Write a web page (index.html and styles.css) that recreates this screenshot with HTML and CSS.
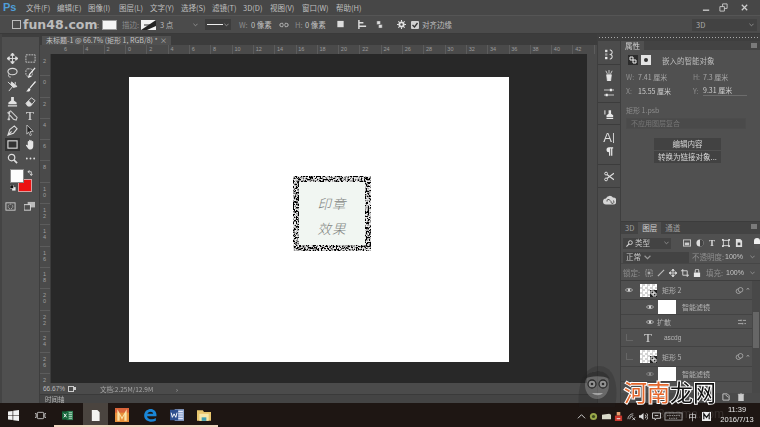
FILE: index.html
```html
<!DOCTYPE html>
<html lang="zh">
<head>
<meta charset="utf-8">
<title>Photoshop</title>
<link rel="stylesheet" href="styles.css">
</head>
<body>
<svg class="defs" width="0" height="0">
  <defs>
    <filter id="noise" x="-5%" y="-5%" width="110%" height="110%">
      <feTurbulence type="fractalNoise" baseFrequency="0.6" numOctaves="2" seed="7" result="t"/>
      <feColorMatrix in="t" type="matrix" values="0 0 0 0 0  0 0 0 0 0  0 0 0 0 0  4 4 0 0 -3.400" result="a"/>
      <feFlood flood-color="#ececec" result="w"/>
      <feMerge result="m"><feMergeNode in="w"/><feMergeNode in="a"/></feMerge>
      <feComposite in="m" in2="SourceAlpha" operator="in"/>
    </filter>
    <symbol id="eye" viewBox="0 0 12 8"><path d="M.5 4C3 .8 9 .8 11.500 4 9 7.200 3 7.200 .5 4Z" fill="none" stroke="#d8d8d8"/><circle cx="6" cy="4" r="1.800" fill="#d8d8d8"/></symbol>
    <symbol id="link" viewBox="0 0 12 10"><circle cx="4.500" cy="6" r="3.300" fill="none" stroke="#bbb"/><circle cx="7.500" cy="4" r="3.300" fill="#505050" stroke="#bbb"/></symbol>
    <symbol id="smart" viewBox="0 0 7 7"><rect width="7" height="7" fill="#222"/><path d="M1 1h3v3H1zM3 3h3v3H3z" fill="none" stroke="#eee"/></symbol>
  </defs>
</svg>
<div class="app">
  <header class="menubar">
    <span class="ps">Ps</span>
    <span class="mi">文件(F)</span><span class="mi">编辑(E)</span><span class="mi">图像(I)</span><span class="mi">图层(L)</span><span class="mi">文字(Y)</span><span class="mi">选择(S)</span><span class="mi">滤镜(T)</span><span class="mi mi-3d">3D(D)</span><span class="mi mi-view">视图(V)</span><span class="mi mi-win">窗口(W)</span><span class="mi">帮助(H)</span>
    <span class="winctl">
      <svg class="wc" viewBox="0 0 10 10"><path d="M1 8h7" stroke="#ccc" stroke-width="1.500"/></svg>
      <svg class="wc" viewBox="0 0 10 10"><path d="M1 4h5v5H1zM4 4V1h5v5H6" fill="none" stroke="#ccc"/></svg>
      <svg class="wc wc-x" viewBox="0 0 10 10"><path d="M2 2l6 6M8 2l-6 6" stroke="#ccc" stroke-width="1.400"/></svg>
    </span>
  </header>

  <div class="options">
    <span class="wm"><i class="wm-box"></i>fun48.com</span>
    <span class="colon">:</span>
    <span class="swatch"></span>
    <span class="lbl l-stroke">描边:</span>
    <svg class="swatch2" viewBox="0 0 15 10"><rect width="15" height="10" fill="#f2f2f2"/><path d="M0 10L15 0V6L6 10Z" fill="#222"/><path d="M3 5h9" stroke="#222"/></svg>
    <span class="lbl l-size">3 点</span>
    <svg class="caret c-size" viewBox="0 0 6 4"><path d="M.5.5L3 3 5.500.5" fill="none" stroke="#999"/></svg>
    <span class="linebtn"><i class="line"></i><svg class="caret" viewBox="0 0 6 4"><path d="M.5.5L3 3 5.500.5" fill="none" stroke="#999"/></svg></span>
    <span class="lbl l-w">W:</span>
    <span class="val">0 像素</span>
    <svg class="chain" viewBox="0 0 12 6"><path d="M5 1H3a2 2 0 000 4h2M7 1h2a2 2 0 010 4H7M4 3h4" fill="none" stroke="#ccc"/></svg>
    <span class="lbl l-h">H:</span>
    <span class="val v-h">0 像素</span>
    <svg class="opi o1" viewBox="0 0 10 10"><rect x="1.500" y="1" width="7" height="7" fill="#ddd"/></svg>
    <svg class="opi o2" viewBox="0 0 10 10"><path d="M1 0v10M1 3h5M1 7h8" stroke="#ddd" stroke-width="1.600"/></svg>
    <svg class="opi o3" viewBox="0 0 10 10"><path d="M2 1h4v4H2zM4 5h4v4H4z" fill="#ddd" stroke="#555" stroke-width=".5"/></svg>
    <svg class="opi o4" viewBox="0 0 10 10"><circle cx="5" cy="5" r="2.400" fill="none" stroke="#e2e2e2" stroke-width="2"/><path d="M5 0v2M5 8v2M0 5h2M8 5h2M1.500 1.500l1.400 1.400M7.100 7.100l1.400 1.400M1.500 8.500l1.400-1.400M7.100 2.900l1.400-1.400" stroke="#e2e2e2" stroke-width="1.200"/></svg>
    <svg class="check" viewBox="0 0 8 8"><rect width="8" height="8" rx="1" fill="#d0d0d0"/><path d="M1.500 4l2 2 3-4" fill="none" stroke="#333" stroke-width="1.300"/></svg>
    <span class="lbl l-align">对齐边缘</span>
    <span class="sel3d"><span>3D</span><svg class="caret" viewBox="0 0 6 4"><path d="M.5.5L3 3 5.500.5" fill="none" stroke="#999"/></svg></span>
  </div>

  <div class="main">
    <aside class="tools">
      <div class="grip"></div>
      <div class="toolgrid">
        <svg class="ti" viewBox="0 0 12 12"><path d="M6 0v12M0 6h12M6 0L4 2.500h4zM6 12L4 9.500h4zM0 6l2.500-2v4zM12 6L9.500 4v4z" stroke="#ddd" fill="#ddd"/></svg>
        <svg class="ti" viewBox="0 0 12 12"><rect x="1" y="2" width="10" height="8" fill="none" stroke="#ccc" stroke-dasharray="2 1"/></svg>
        <svg class="ti" viewBox="0 0 12 12"><ellipse cx="6" cy="5" rx="5" ry="3.500" fill="none" stroke="#ddd" stroke-width="1.200"/><path d="M2 8c-1 2 0 3 2 3" fill="none" stroke="#ddd"/></svg>
        <svg class="ti" viewBox="0 0 12 12"><rect x="1" y="2" width="7" height="8" rx="2" fill="none" stroke="#ccc" stroke-dasharray="2 1"/><path d="M11 1L5 8l-1 3 3-1" fill="none" stroke="#eee" stroke-width="1.300"/></svg>
        <svg class="ti" viewBox="0 0 12 12"><path d="M1 1l3 3M7 5l-5 6M5 1l6 5-4 1-3-3z" stroke="#ddd" fill="#ddd"/><path d="M9 1v3" stroke="#ddd"/></svg>
        <svg class="ti" viewBox="0 0 12 12"><path d="M11 0L5 7l1 1 6-7zM4.500 7.500C3 8 3 11 1 11c2 1 5 1 5-2.500z" fill="#eee"/></svg>
        <svg class="ti" viewBox="0 0 12 12"><path d="M4.500 1h3v4l3 2v2h-9V7l3-2zM1 10h10v1.500H1z" fill="#e2e2e2"/></svg>
        <svg class="ti" viewBox="0 0 12 12"><path d="M1 8l6-6 4 3-5 6H3z" fill="none" stroke="#ddd"/><path d="M1 8l3-3 4 4-2 2H3z" fill="#ddd"/></svg>
        <svg class="ti" viewBox="0 0 12 12"><path d="M1 3l3-2 7 7-1 3-3-1zM3 2l-1 7" fill="none" stroke="#ccc" stroke-width="1.200"/><circle cx="2" cy="10" r="1.300" fill="#ccc"/></svg>
        <span class="ti-t">T</span>
        <svg class="ti" viewBox="0 0 12 12"><path d="M1 11l2-6 5-4 3 3-4 5zM1 11l4-4" fill="none" stroke="#ddd" stroke-width="1.200"/></svg>
        <svg class="ti" viewBox="0 0 12 12"><path d="M2 0l7 7H5.500L7 11l-1.500.5L4 7.500 2 10z" fill="#222" stroke="#ddd" stroke-width=".8"/></svg>
        <span class="ti-active"><svg class="ti" viewBox="0 0 12 12"><rect x="1" y="2" width="10" height="8" fill="none" stroke="#ddd" stroke-width="1.200"/></svg></span>
        <svg class="ti" viewBox="0 0 12 12"><path d="M3 7V3c0-1 1.500-1 1.500 0V1.500c0-1 1.500-1 1.500 0V2c0-1 1.500-1 1.500 0v1c0-1 1.500-1 1.500 0v5c0 2-1 3.500-3 3.500S4 11 1 7c0-1 1-1 2 0z" fill="#e6e6e6"/></svg>
        <svg class="ti" viewBox="0 0 12 12"><circle cx="5" cy="5" r="3.500" fill="none" stroke="#ddd" stroke-width="1.300"/><path d="M7.500 7.500L11 11" stroke="#ddd" stroke-width="1.800"/></svg>
        <svg class="ti" viewBox="0 0 12 12"><circle cx="2" cy="6" r="1" fill="#ddd"/><circle cx="6" cy="6" r="1" fill="#ddd"/><circle cx="10" cy="6" r="1" fill="#ddd"/></svg>
      </div>
      <div class="colors">
        <span class="bgc"></span>
        <span class="fgc"></span>
        <svg class="swap" viewBox="0 0 7 7"><path d="M1 2h4v4M3 .5L1 2l2 1.500M3.500 4.500L5 6.500 6.500 4.500" fill="none" stroke="#ddd"/></svg>
        <svg class="deflt" viewBox="0 0 7 7"><rect x="2.500" y="2.500" width="4" height="4" fill="#eee"/><rect width="4" height="4" fill="#111" stroke="#ddd" stroke-width=".6"/></svg>
      </div>
      <div class="toolbottom">
        <svg class="ti" viewBox="0 0 12 12"><rect x="1" y="2" width="10" height="8" fill="none" stroke="#ccc"/><circle cx="6" cy="6" r="2.500" fill="none" stroke="#ccc" stroke-dasharray="1 1"/></svg>
        <svg class="ti" viewBox="0 0 12 12"><rect x="4" y="1" width="8" height="6" fill="#bbb"/><rect x="0" y="4" width="7" height="6" fill="#4e4e4e" stroke="#ddd"/></svg>
      </div>
    </aside>

    <section class="docwrap">
      <div class="tabstrip"><div class="tab"><span>未标题-1 @ 66.7% (矩形 1, RGB/8) *</span><span class="tabx">×</span></div></div>
      <div class="hruler">
        <i class="corner"></i>
        <b>6</b><b>4</b><b>2</b><b>0</b><b>2</b><b>4</b><b>6</b><b>8</b><b>10</b><b>12</b><b>14</b><b>16</b><b>18</b><b>20</b><b>22</b><b>24</b><b>26</b><b>28</b><b>30</b><b>32</b><b>34</b><b>36</b><b>38</b><b>40</b><b>42</b>
      </div>
      <div class="docmid">
        <div class="vruler">
          <b>2</b><b>0</b><b>2</b><b>4</b><b>6</b><b>8</b><b>1<br>0</b><b>1<br>2</b><b>1<br>4</b><b>1<br>6</b><b>1<br>8</b><b>2<br>0</b><b>2<br>2</b><b>2<br>4</b><b>2<br>6</b><b class="vlast">2</b>
        </div>
        <div class="canvas">
          <div class="doc">
            <div class="stamp">
              <svg class="stampborder" viewBox="0 0 78 75"><rect x="3" y="3" width="72" height="69" fill="none" stroke="#000" stroke-width="6" filter="url(#noise)"/></svg>
              <span>印章</span><span>效果</span>
            </div>
          </div>
        </div>
        <div class="vscroll"></div>
      </div>
      <div class="status"><span class="zoom">66.67%</span><svg class="st-ic" viewBox="0 0 8 6"><rect x=".5" y=".5" width="5" height="5" fill="none" stroke="#ccc"/><path d="M6 1h2v3H6" fill="#ccc"/></svg><span class="docinfo">文档:2.25M/12.9M</span><span class="st-arrow">›</span></div>
      <div class="timeline"><span>时间轴</span></div>
    </section>

    <nav class="dock">
      <div class="grip"></div>
      <div class="dockgroup g1">
        <svg class="di" viewBox="0 0 12 14"><rect x="1" y="1" width="3" height="3" fill="#ddd"/><rect x="1" y="5.500" width="3" height="3" fill="#999"/><rect x="1" y="10" width="3" height="3" fill="#eee"/><path d="M7 1c4 1 4 5 1 6 3 1 3 5-1 6" fill="none" stroke="#ddd" stroke-width="1.300"/></svg>
      </div>
      <div class="dockgroup g2">
        <svg class="di" viewBox="0 0 12 14"><path d="M3 6h6l-1 8H4zM2 1l2 4M6 0v5M10 1L8 5" stroke="#e6e6e6" fill="#e6e6e6"/></svg>
        <svg class="di" viewBox="0 0 12 12"><path d="M0 3h12M0 9h12" stroke="#ddd"/><rect x="7" y="1.500" width="2.500" height="3" fill="#eee"/><rect x="2" y="7.500" width="2.500" height="3" fill="#eee"/></svg>
      </div>
      <div class="dockgroup g3">
        <svg class="di" viewBox="0 0 12 12"><rect x="0" y="1" width="2" height="5" fill="#aaa"/><path d="M5.500 1h3v4l2.500 2v2H3V7l2.500-2zM3 10h8v1.500H3z" fill="#e6e6e6"/></svg>
      </div>
      <div class="dockgroup g4">
        <span class="di-a">A<i>|</i></span>
        <svg class="di" viewBox="0 0 12 12"><path d="M5 1h6v1.500h-1V11H8.500V2.500h-1V11H6V7a3 3 0 010-6z" fill="#e6e6e6"/></svg>
      </div>
      <div class="dockgroup g5">
        <svg class="di" viewBox="0 0 12 12"><circle cx="2.500" cy="2.500" r="1.700" fill="none" stroke="#ddd" stroke-width="1.200"/><circle cx="2.500" cy="9.500" r="1.700" fill="none" stroke="#ddd" stroke-width="1.200"/><path d="M3.500 3.500L12 10M3.500 8.500L12 2" stroke="#ddd" stroke-width="1.400"/></svg>
      </div>
      <div class="dockgroup g6">
        <svg class="di di-cc" viewBox="0 0 14 10"><path d="M4 9.500a3 3 0 010-6 4 4 0 017-1 3.500 3.500 0 010 7z" fill="#d6d6d6"/><path d="M5 6.500a1.500 1.500 0 013-1l1 1a1.500 1.500 0 102-1" fill="none" stroke="#555"/></svg>
      </div>
    </nav>

    <aside class="panels">
      <div class="grip grip-r"></div>
      <section class="props">
        <div class="ptabs"><span class="ptab on">属性</span><i class="pmenu"></i></div>
        <div class="smartrow">
          <span class="smbtn dark"><svg viewBox="0 0 8 8"><path d="M1 1h3v3H1zM4 4h3v3H4z" fill="none" stroke="#eee"/></svg></span>
          <span class="smbtn light"><i></i></span>
          <span class="smtxt">嵌入的智能对象</span>
        </div>
        <div class="geo g-top"><span class="k">W:</span><span class="v dim">7.41 厘米</span><span class="k k2">H:</span><span class="v dim">7.3 厘米</span></div>
        <div class="geo g-second"><span class="k">X:</span><span class="v">15.55 厘米</span><span class="k k2">Y:</span><span class="v under">9.31 厘米</span></div>
        <div class="psb"><span class="k">矩形</span> 1.psb</div>
        <div class="compsel">不应用图层复合</div>
        <div class="pbtn p-first">编辑内容</div>
        <div class="pbtn">转换为链接对象...</div>
      </section>
      <section class="layers">
        <div class="ptabs ltabs"><span class="ptab">3D</span><span class="ptab on">图层</span><span class="ptab">通道</span><i class="pmenu"></i></div>
        <div class="lrow filter">
          <span class="ddl dd-kind"><svg viewBox="0 0 8 8"><circle cx="5" cy="3" r="2.200" fill="none" stroke="#ddd"/><path d="M3.500 4.500L.5 7.500" stroke="#ddd" stroke-width="1.300"/></svg>类型<svg class="caret" viewBox="0 0 6 4"><path d="M.5.5L3 3 5.500.5" fill="none" stroke="#999"/></svg></span>
          <svg class="fi" viewBox="0 0 9 9"><rect x=".5" y="1" width="8" height="7" fill="none" stroke="#ccc"/><rect x="2" y="4" width="5" height="3" fill="#ccc"/></svg>
          <svg class="fi" viewBox="0 0 9 9"><circle cx="4.500" cy="4.500" r="4" fill="#ddd"/><path d="M4.500 .5a4 4 0 010 8z" fill="#444"/></svg>
          <span class="fi-t">T</span>
          <svg class="fi" viewBox="0 0 9 9"><rect x="1.500" y="1.500" width="6" height="6" fill="none" stroke="#ddd"/><path d="M0 0h2v2H0zM7 0h2v2H7zM0 7h2v2H0zM7 7h2v2H7z" fill="#ddd"/></svg>
          <svg class="fi" viewBox="0 0 9 9"><path d="M1 0h5l2 2v7H1z" fill="#ddd"/><rect x="3" y="4" width="3" height="3" fill="#444"/></svg>
          <span class="toggle"></span>
        </div>
        <div class="lrow blend">
          <span class="ddl dd-blend">正常<svg class="caret" viewBox="0 0 6 4"><path d="M.5.5L3 3 5.500.5" fill="none" stroke="#999"/></svg></span>
          <span class="lk lk-op">不透明度:</span><span class="pct">100%</span><svg class="caret" viewBox="0 0 6 4"><path d="M.5.5L3 3 5.500.5" fill="none" stroke="#999"/></svg>
        </div>
        <div class="lrow lockrow">
          <span class="lk lk-lock">锁定:</span>
          <svg class="fi" viewBox="0 0 9 9"><rect x="1" y="1" width="7" height="7" fill="none" stroke="#aaa" stroke-dasharray="1.500 1"/><rect x="3" y="3" width="3" height="3" fill="#aaa"/></svg>
          <svg class="fi" viewBox="0 0 9 9"><path d="M8 1L1 8" stroke="#bbb" stroke-width="1.300"/></svg>
          <svg class="fi" viewBox="0 0 9 9"><path d="M4.500 0v9M0 4.500h9M4.500 0L3 2h3zM4.500 9L3 7h3zM0 4.500L2 3v3zM9 4.500L7 3v3z" stroke="#ddd" stroke-width=".8" fill="#ddd"/></svg>
          <svg class="fi" viewBox="0 0 9 9"><path d="M2 0v7h7M0 2h7v7" fill="none" stroke="#ddd"/></svg>
          <svg class="fi" viewBox="0 0 9 9"><rect x="1" y="4" width="7" height="5" fill="#e6e6e6"/><path d="M2.500 4V2a2 2 0 014 0v2" fill="none" stroke="#e6e6e6"/></svg>
          <span class="lk lk-fill">填充:</span><span class="pct">100%</span><svg class="caret" viewBox="0 0 6 4"><path d="M.5.5L3 3 5.500.5" fill="none" stroke="#999"/></svg>
        </div>
        <div class="layerlist">
          <div class="listbody">
            <div class="layer l-a">
              <svg class="eye"><use href="#eye"/></svg>
              <span class="thumb checker"><svg class="so"><use href="#smart"/></svg></span>
              <span class="lname">矩形 2</span>
              <svg class="lnk"><use href="#link"/></svg><span class="up">⌃</span>
            </div>
            <div class="layer l-b">
              <svg class="eye"><use href="#eye"/></svg>
              <span class="thumb white"></span>
              <span class="lname">智能滤镜</span>
            </div>
            <div class="layer l-c">
              <svg class="eye"><use href="#eye"/></svg>
              <span class="lname n-spread">扩散</span>
              <svg class="adj" viewBox="0 0 10 6"><path d="M0 1h4M6 1h4M0 5h6M8 5h2M4 0v2M6 4v2" stroke="#bbb"/></svg>
            </div>
            <div class="layer l-d">
              <span class="vis"></span>
              <span class="tt">T</span>
              <span class="lname n-asc">ascdg</span>
            </div>
            <div class="layer l-e">
              <span class="vis"></span>
              <span class="thumb checker"><svg class="so"><use href="#smart"/></svg></span>
              <span class="lname">矩形 5</span>
              <svg class="lnk"><use href="#link"/></svg><span class="up">⌃</span>
            </div>
            <div class="layer l-b">
              <svg class="eye dimmed"><use href="#eye"/></svg>
              <span class="thumb white"></span>
              <span class="lname">智能滤镜</span>
            </div>
          </div>
          <div class="lscroll"><i></i></div>
        </div>
        <div class="lfoot">
          <svg class="fi" viewBox="0 0 9 9"><path d="M1 1h5l2 2v5H1z" fill="none" stroke="#ccc"/><path d="M4 2l3 3" stroke="#ccc"/></svg>
          <svg class="fi" viewBox="0 0 9 9"><path d="M2 2h5v7H2zM1 1.500h7M3.500 0h2" fill="#ccc" stroke="#ccc"/></svg>
        </div>
      </section>
    </aside>
  </div>

  <footer class="taskbar">
    <span class="tb"><svg viewBox="0 0 12 12"><path d="M0 1.700L5 1v4.600H0zM5.700 .9L12 0v5.600H5.700zM0 6.300h5v4.700L0 10.300zM5.700 6.300H12V12l-6.300-.9z" fill="#f2f2f2"/></svg></span>
    <span class="tb"><svg viewBox="0 0 14 10"><rect x="3" y="1" width="8" height="8" rx="1" fill="none" stroke="#ddd"/><path d="M0 2.500h1.500v5H0M14 2.500h-1.500v5H14" fill="none" stroke="#ddd"/></svg></span>
    <span class="tb u"><svg viewBox="0 0 12 12"><rect x="5" y="1" width="7" height="10" fill="#2f7d52"/><path d="M7 3h4M7 5h4M7 7h4M7 9h4" stroke="#d7efe0" stroke-width=".8"/><rect y="1.500" width="7" height="9" fill="#15653a"/><path d="M2 4l3 4M5 4L2 8" stroke="#fff"/></svg></span>
    <span class="tb u active"><svg viewBox="0 0 12 12"><path d="M2 0h6l2.500 2.500V12H2z" fill="#f3f3f0"/></svg></span>
    <span class="tb u"><svg class="big" viewBox="0 0 12 12"><rect width="12" height="12" fill="#e8913a"/><rect width="12" height="4" fill="#d9643a"/><path d="M2 1l4 7 4-7v10H8V6L6 10 4 6v5H2z" fill="#fbe2a8"/></svg></span>
    <span class="tb u"><svg class="big" viewBox="0 0 12 12"><path d="M11.500 7H3.500c.3 3 5 3.500 7.500 1.500V11c-4 2-10 .5-10-4.500C1 1.500 6 0 8.500 1.200 11 2.400 11.800 4.500 11.500 7zM3.700 5h5c0-2.500-4-2.500-5 0z" fill="#1a86d6"/></svg></span>
    <span class="tb u"><svg class="big" viewBox="0 0 12 12"><rect x="4" y="1" width="8" height="10" fill="#8ea6cf"/><path d="M6 3h5M6 5h5M6 7h5M6 9h5" stroke="#eef" stroke-width=".8"/><rect y="1.500" width="7" height="9" fill="#2e4f8f"/><path d="M1 4l1 4 1.500-3L5 8l1-4" fill="none" stroke="#fff" stroke-width=".8"/></svg></span>
    <span class="tb u"><svg class="big" viewBox="0 0 12 12"><path d="M0 2h5l1 1.500h6V11H0z" fill="#e8c66e"/><rect x="2" y="5" width="8" height="6" fill="#f7e7a9"/><rect x="4" y="8" width="4" height="3" fill="#3f9fb4"/></svg></span>
    <span class="tray">
      <svg class="tr" viewBox="0 0 10 10"><path d="M1 7l4-4 4 4" fill="none" stroke="#ddd"/></svg>
      <svg class="tr" viewBox="0 0 10 10"><circle cx="5" cy="5" r="4" fill="#9aa84a"/><circle cx="5" cy="5" r="1.800" fill="#3d4a20"/></svg>
      <svg class="tr" viewBox="0 0 10 10"><path d="M0 3l8-1 2 1v5H0z" fill="#d9d9c9"/></svg>
      <svg class="tr" viewBox="0 0 10 10"><rect x="3" y="0" width="4" height="4" fill="#e8a070"/><rect x="1" y="4" width="8" height="6" fill="#c9362c"/><rect x="3" y="7" width="4" height="1" fill="#fff"/></svg>
      <svg class="tr" viewBox="0 0 10 10"><path d="M1 8a6 6 0 016-6M3 8a4 4 0 014-4" fill="none" stroke="#bbb"/><path d="M6 6l3 3M9 6L6 9" stroke="#ddd"/></svg>
      <svg class="tr" viewBox="0 0 10 10"><path d="M0 3.500h2L5 1v8L2 6.500H0z" fill="#ddd"/><path d="M7 3a3 3 0 010 4M8.500 1.500a5 5 0 010 7" fill="none" stroke="#ddd"/></svg>
      <svg class="tr" viewBox="0 0 10 10"><path d="M.5 1h9v6H5L3.500 9V7h-3z" fill="none" stroke="#ddd"/><path d="M3 4h4" stroke="#ddd"/></svg>
      <svg class="tr tr-k" viewBox="0 0 20 10"><rect x=".5" y="1" width="19" height="8" fill="none" stroke="#aaa"/><path d="M3 4h14M5 7h10" stroke="#aaa" stroke-dasharray="1.500 1"/></svg>
      <span class="zh">中</span>
      <svg class="tr" viewBox="0 0 10 10"><rect width="10" height="10" fill="#eee"/><path d="M2 8V2l3 4 3-4v6" fill="none" stroke="#111" stroke-width="1.300"/></svg>
    </span>
    <span class="clock"><span>11:39</span><span>2016/7/13</span></span>
  </footer>

  <svg class="face" viewBox="0 0 46 44"><path d="M4 44C2 28 6 4 24 3 40 3 44 24 40 44z" fill="#222" opacity=".45"/><ellipse cx="22" cy="22" rx="12" ry="14" fill="#9a9a9a" opacity=".75"/><path d="M9 16C14 6 30 5 35 16 26 12 16 13 9 16z" fill="#222"/><circle cx="17" cy="21" r="4" fill="#ccc" stroke="#111" stroke-width="1.300"/><circle cx="28" cy="21" r="4" fill="#ccc" stroke="#111" stroke-width="1.300"/><circle cx="17" cy="21" r="1.300" fill="#111"/><circle cx="28" cy="21" r="1.300" fill="#111"/><path d="M17 30c3 3 8 3 11 0z" fill="#eee"/></svg>
  <div class="brand"><span class="orange">河南</span><span class="black">龙网</span></div>
  <div class="mark">3mama.com</div>
</div>
</body>
</html>
```

FILE: styles.css
```css
* { box-sizing: border-box; margin: 0; padding: 0; }
html, body { width: 760px; height: 427px; overflow: hidden; background: #4b4b4b; }
body { font-family: "Noto Sans CJK SC", "Noto Sans", sans-serif; font-size: 7.5px; color: #b8b8b8; }
.defs { position: absolute; }
svg { display: block; flex: none; }
i { display: block; font-style: normal; }
.app { position: relative; width: 760px; height: 427px; display: flex; flex-direction: column; overflow: hidden; filter: blur(0.35px); }

/* menu */
.menubar { height: 15px; flex: none; display: flex; align-items: center; background: #474747; line-height: 11px; }
.ps { width: 26px; padding-left: 3px; font: bold 11px/13px "Liberation Sans", sans-serif; color: #4f9ed8; }
.mi { width: 31px; white-space: nowrap; font-size: 7.5px; color: #bfbfbf; }
.mi-3d { width: 27px; }
.mi-view { width: 32px; }
.mi-win { width: 34px; }
.winctl { margin-left: auto; display: flex; padding-right: 11px; gap: 8px; }
.wc { width: 9px; height: 9px; }
.wc-x { margin-left: 4px; }

/* options */
.options { height: 19px; flex: none; display: flex; align-items: center; background: #4b4b4b; border-top: 1px solid #555; border-bottom: 1px solid #3a3a3a; padding-left: 12px; font-size: 7.5px; line-height: 11px; }
.wm { width: 85px; display: flex; align-items: center; font: bold 12.500px/14px "DejaVu Sans", sans-serif; color: #bcbcbc; white-space: nowrap; }
.wm-box { width: 9px; height: 9px; border: 1px solid #bcbcbc; margin-right: 2px; flex: none; }
.colon { width: 5px; color: #aaa; }
.swatch { width: 15px; height: 10px; background: #f4f4f4; border: 1px solid #999; }
.lbl { white-space: nowrap; color: #aaa; }
.l-stroke { margin-left: 5px; width: 19px; color: #8c8c8c; }
.swatch2 { width: 15px; height: 10px; }
.l-size { margin-left: 4px; width: 33px; color: #b8b8b8; }
.caret { width: 5px; height: 4px; }
.c-size { margin-right: 7px; }
.linebtn { width: 26px; height: 11px; background: #3d3d3d; display: flex; align-items: center; padding: 0 2px; gap: 1px; }
.line { flex: 1; height: 1.500px; background: #eee; }
.l-w { margin-left: 8px; width: 12px; color: #8c8c8c; }
.val { width: 25px; color: #c2c2c2; white-space: nowrap; }
.chain { width: 10px; height: 6px; margin-left: 3px; }
.l-h { margin-left: 6px; width: 10px; color: #8c8c8c; }
.v-h { width: 25px; }
.opi { width: 9px; height: 9px; }
.o1 { margin-left: 6px; }
.o2 { margin-left: 13px; }
.o3 { margin-left: 8px; }
.o4 { margin-left: 13px; }
.check { width: 8px; height: 8px; margin-left: 5px; }
.l-align { margin-left: 3px; color: #bdbdbd; }
.sel3d { margin-left: auto; margin-right: 3px; width: 65px; height: 12px; background: #424242; display: flex; align-items: center; justify-content: space-between; padding: 0 3px 0 4px; color: #aaa; }

/* main */
.main { height: 369px; flex: none; display: flex; }
.grip { height: 7px; background: #3e3e3e radial-gradient(circle, #aaa 0 .8px, transparent 1px) 3px 0 / 3px 7px repeat-x; background-size: 3px 7px; }
.tools { width: 40px; flex: none; background: #4f4f4f; border-left: 2px solid #444; border-right: 1px solid #3e3e3e; }
.tools .grip { height: 3px; background: #3e3e3e; margin-bottom: 0; }
.toolgrid { display: grid; grid-template-columns: 18px 18px; grid-auto-rows: 14.4px; justify-items: center; align-items: center; padding: 14px 0 0 1px; }
.ti { width: 11px; height: 11px; }
.ti-t { font: 13px/12px "Liberation Serif", serif; color: #e0e0e0; }
.ti-active { width: 15px; height: 13px; background: #333; display: flex; align-items: center; justify-content: center; }
.colors { position: relative; height: 25px; margin: 3px 0 0 8px; width: 24px; }
.fgc { position: absolute; left: 0; top: 0; width: 14px; height: 14px; background: #fdfdfd; border: 1px solid #888; }
.bgc { position: absolute; left: 8px; top: 10px; width: 14px; height: 13px; background: #ec1212; border: 1px solid #d8a0a0; }
.swap { position: absolute; left: 17px; top: 1px; width: 6px; height: 6px; }
.deflt { position: absolute; left: 0; top: 16px; width: 6px; height: 6px; }
.toolbottom { display: flex; gap: 8px; padding: 7px 0 0 3px; }

/* document */
.docwrap { width: 557px; flex: none; display: flex; flex-direction: column; background: #4f4f4f; }
.tabstrip { height: 11px; flex: none; background: #3c3c3c; padding-top: 2px; }
.tab { width: 129px; height: 9px; margin-left: 2px; background: #505050; font-size: 7px; line-height: 9px; color: #c4c4c4; display: flex; justify-content: space-between; padding: 0 4px; white-space: nowrap; }
.tabx { color: #bbb; }
.hruler { height: 9px; flex: none; display: flex; background: #4a4a4a repeating-linear-gradient(90deg, #5c5c5c 0 1px, transparent 1px 21.3px); }
.corner { width: 24px; flex: none; background: #4a4a4a; }
.hruler b { width: 21.3px; flex: none; font: 400 5.500px/9px "Liberation Sans", sans-serif; color: #9c9c9c; }
.docmid { flex: 1; min-height: 0; display: flex; }
.vruler { width: 11px; flex: none; height: 329px; background: #4a4a4a; padding-top: 1px; border-right: 1px solid #3c3c3c; }
.vruler b { display: block; height: 21.3px; font: 400 5.500px/6px "Liberation Sans", sans-serif; color: #a0a0a0; padding-left: 3px; padding-top: 3px; border-bottom: 1px solid #5c5c5c; }
.vruler .vlast { height: 9px; border-bottom: 0; }
.canvas { width: 536px; flex: none; background: #282828; padding: 23px 78px 21px 78px; }
.doc { height: 285px; width: 380px; background: #fff; padding: 99px 0 0 164px; }
.stamp { position: relative; width: 78px; height: 75px; background: #f1f6f2; display: flex; flex-direction: column; align-items: center; justify-content: center; gap: 7px; padding-top: 3px; font-size: 13.5px; line-height: 18px; letter-spacing: 1px; font-style: italic; font-weight: 300; color: #7f8481; }
.stampborder { position: absolute; left: 0; top: 0; width: 78px; height: 75px; }
.vscroll { flex: 1; background: #4a4a4a; }
.status { height: 11px; flex: none; display: flex; align-items: center; background: #4b4b4b; padding-left: 3px; font-size: 6.500px; line-height: 10px; color: #bbb; }
.zoom { width: 25px; font-family: "Liberation Sans", sans-serif; }
.st-ic { width: 8px; height: 6px; }
.docinfo { margin-left: 24px; width: 76px; color: #a8a8a8; white-space: nowrap; }
.timeline { height: 9px; flex: none; background: #444; border-top: 1px solid #3a3a3a; padding-left: 5px; font-size: 6.500px; line-height: 8px; color: #b5b5b5; }

/* dock */
.dock { width: 23px; flex: none; background: #4c4c4c; border-left: 1px solid #3e3e3e; }
.dockgroup { display: flex; flex-direction: column; align-items: center; border-bottom: 1px solid #3c3c3c; }
.di { width: 10px; height: 11px; }
.di-cc { width: 14px; height: 10px; }
.di-a { font: 13px/13px "Liberation Sans", sans-serif; color: #ddd; display: flex; }
.di-a i { font-size: 11px; }
.g1 { height: 24px; padding-top: 8px; }
.g2 { height: 38px; padding-top: 5px; gap: 6px; }
.g3 { height: 22px; padding-top: 6px; }
.g4 { height: 40px; padding-top: 6px; gap: 2px; }
.g5 { height: 23px; padding-top: 6px; }
.g6 { height: 26px; padding-top: 7px; border-bottom: 0; }

/* panels */
.panels { width: 140px; flex: none; background: #505050; display: flex; flex-direction: column; border-left: 1px solid #3e3e3e; }
.props { height: 181px; flex: none; border-bottom: 1px solid #3c3c3c; }
.ptabs { height: 9px; display: flex; align-items: stretch; background: #434343; position: relative; }
.ptab { padding: 0 4px; font-size: 7.500px; line-height: 9px; color: #9e9e9e; }
.ptab.on { background: #505050; color: #d2d2d2; }
.pmenu { position: absolute; right: 3px; top: 2px; width: 6px; height: 5px; background: #7a7a7a; }
.smartrow { display: flex; align-items: center; gap: 3px; padding: 3px 0 0 7px; height: 17px; line-height: 11px; }
.smbtn { width: 10px; height: 10px; display: flex; align-items: center; justify-content: center; }
.smbtn svg { width: 8px; height: 8px; }
.smbtn.dark { background: #2c2c2c; }
.smbtn.light { background: #e4e4e4; }
.smbtn.light i { width: 4px; height: 4px; border-radius: 50%; background: #333; }
.smtxt { margin-left: 8px; font-size: 7.500px; color: #bdbdbd; }
.geo { display: flex; align-items: center; height: 13px; padding-left: 5px; font-size: 7px; line-height: 10px; color: #cfcfcf; }
.g-top { margin-top: 3px; }
.g-second { margin-top: 1px; }
.k { color: #8e8e8e; width: 13px; }
.k2 { margin-left: 0; width: 10px; }
.v { width: 55px; white-space: nowrap; }
.dim { color: #a8a8a8; }
.under { width: 44px; border-bottom: 1px solid #6c6c6c; }
.geo .k:first-child { width: 12px; }
.psb { margin-top: 9px; padding-left: 5px; font-size: 7px; line-height: 9px; color: #8e8e8e; }
.compsel { margin: 3px 0 0 5px; width: 120px; height: 11px; background: #4a4a4a; border: 1px solid #4c4c4c; font-size: 7px; line-height: 9px; padding-left: 4px; color: #777; }
.pbtn { margin: 1px 0 0 33px; width: 67px; height: 12px; background: #424242; text-align: center; font-size: 7.500px; line-height: 12px; color: #d6d6d6; white-space: nowrap; }
.p-first { margin-top: 9px; }

/* layers */
.layers { flex: 1; min-height: 0; display: flex; flex-direction: column; }
.ltabs { height: 12px; flex: none; }
.ltabs .ptab { line-height: 12px; }
.lrow { display: flex; align-items: center; flex: none; padding-left: 2px; font-size: 7.500px; line-height: 10px; }
.filter { height: 16px; gap: 5px; padding-top: 2px; }
.ddl { display: flex; align-items: center; height: 11px; background: #434343; color: #c8c8c8; white-space: nowrap; }
.ddl svg:first-child { width: 7px; height: 7px; margin: 0 2px 0 3px; }
.ddl .caret { margin-left: auto; margin-right: 2px; }
.dd-kind { width: 48px; margin-right: 7px; }
.dd-blend { width: 66px; padding-left: 3px; margin-right: 3px; }
.fi { width: 8px; height: 8px; }
.fi-t { font: bold 9px/9px "Liberation Serif", serif; color: #ddd; width: 8px; }
.toggle { width: 6px; height: 11px; border-radius: 3px; background: linear-gradient(#f0f0f0 55%, #555 55%); margin-left: 6px; }
.blend { height: 14px; padding-top: 1px; border-bottom: 1px solid #464646; }
.lk { color: #8e8e8e; white-space: nowrap; }
.lk-op { width: 33px; }
.pct { width: 25px; color: #c6c6c6; font-family: "Liberation Sans", sans-serif; font-size: 7px; }
.lockrow { height: 15px; gap: 4px; margin-top: 1px; }
.lk-lock { width: 18px; }
.lk-fill { margin-left: 1px; width: 16px; }
.lockrow .pct { width: 22px; margin-right: -2px; }
.layerlist { flex: 1; min-height: 0; display: flex; overflow: hidden; border-top: 1px solid #3e3e3e; }
.listbody { flex: 1; min-width: 0; }
.lscroll { width: 8px; flex: none; background: #484848; padding-top: 31px; }
.lscroll i { height: 36px; margin: 0 1px; background: #666; }
.layer { display: flex; align-items: center; position: relative; border-bottom: 1px solid #434343; font-size: 7px; line-height: 10px; color: #b4b4b4; }
.l-a { height: 19px; padding-left: 4px; }
.l-b { height: 15px; padding-left: 25px; }
.l-c { height: 14px; padding-left: 25px; }
.l-d { height: 18px; padding-left: 5px; }
.l-e { height: 20px; padding-left: 5px; }
.eye { width: 8px; height: 6px; }
.dimmed { opacity: .5; }
.thumb { position: relative; width: 17px; height: 13px; flex: none; }
.l-a .thumb, .l-e .thumb { margin-left: 7px; }
.l-b .thumb { margin-left: 4px; width: 18px; height: 14px; }
.white { background: #fff; }
.checker { background: repeating-conic-gradient(#d4d4d4 0 25%, #fff 0 50%) 0 0 / 5px 5px; }
.so { position: absolute; right: 0; bottom: 0; width: 7px; height: 7px; }
.lname { margin-left: 5px; white-space: nowrap; }
.l-b .lname { margin-left: 6px; }
.n-spread { margin-left: 3px; }
.n-asc { margin-left: 10px; font-family: "Liberation Sans", sans-serif; font-size: 6.500px; }
.lnk { width: 9px; height: 7px; margin-left: auto; }
.up { width: 8px; text-align: center; font-size: 7px; line-height: 6px; }
.adj { width: 8px; height: 6px; margin-left: auto; margin-right: 6px; }
.vis { width: 7px; height: 7px; border-left: 1px solid #666; border-bottom: 1px solid #666; }
.tt { margin-left: 11px; font: 13px/13px "Liberation Serif", serif; color: #d6d6d6; width: 10px; }
.lfoot { height: 10px; flex: none; display: flex; justify-content: flex-end; gap: 7px; padding-right: 15px; background: #4a4a4a; }

/* taskbar */
.taskbar { height: 24px; flex: none; position: relative; display: flex; align-items: center; background: #1e1613; }
.tb { width: 27.200px; height: 24px; flex: none; display: flex; align-items: center; justify-content: center; }
.tb svg { width: 11px; height: 11px; }
.tb svg.big { width: 14px; height: 14px; }
.tb.u { box-shadow: inset 0 -2px 0 0 #f0d6c0, inset 1px 0 0 #1e1613, inset -1px 0 0 #1e1613; }
.active { background: #4a443f; }
.tray { margin-left: auto; display: flex; align-items: center; gap: 3.500px; padding-top: 2px; line-height: 11px; }
.tr { width: 9px; height: 9px; }
.tr-k { width: 19px; height: 9px; }
.zh { font-size: 8.500px; color: #ddd; width: 12px; text-align: center; }
.clock { width: 46px; display: flex; flex-direction: column; align-items: center; font: 7.500px/10px "Liberation Sans", sans-serif; color: #e6e6e6; margin-left: 3px; }

/* overlays */
.face { position: absolute; left: 575px; top: 363px; width: 46px; height: 44px; opacity: .55; }
.brand { position: absolute; left: 624px; top: 376px; font-size: 23px; line-height: 30px; font-weight: 400; white-space: nowrap; paint-order: stroke fill; -webkit-text-stroke: 2px #fff; }
.orange { color: #e4662b; }
.black { color: #111; }
.mark { position: absolute; left: 658px; top: 407px; font: 12px/14px "Liberation Sans", sans-serif; color: #fff; opacity: .1; }
```
